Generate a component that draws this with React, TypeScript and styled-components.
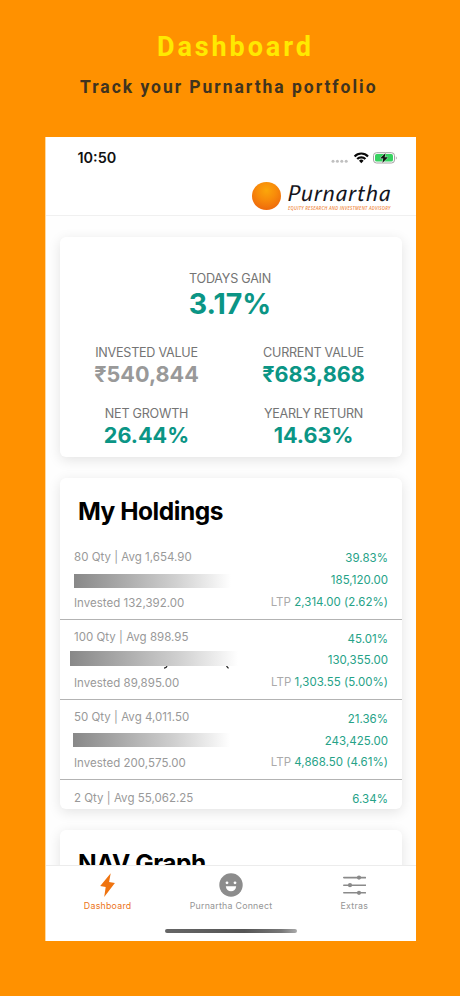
import React from 'react';
import styled, { createGlobalStyle } from 'styled-components';

const GlobalStyle = createGlobalStyle`
  * { box-sizing: border-box; }
  body { margin: 0; background: #ff9100; font-family: Inter, 'Liberation Sans', sans-serif; }
`;

const Page = styled.main`
  width: 460px;
  height: 996px;
  overflow: hidden;
  background: #ff9100;
  display: flex;
  flex-direction: column;
`;

const Headline = styled.h1`
  margin: 31px 0 0 157px;
  font: 700 27px/32px Roboto, sans-serif;
  letter-spacing: 2.9px;
  color: #ffe900;
  white-space: nowrap;
`;

const Tagline = styled.p`
  margin: 13px 0 0 80px;
  font: 700 17.5px/22px Roboto, sans-serif;
  letter-spacing: 1.97px;
  color: #40331f;
  white-space: nowrap;
`;

const Phone = styled.section`
  margin: 39px 0 0 45px;
  width: 371px;
  height: 804px;
  background: #fff;
  border: solid #ffd9a0;
  border-width: 0 0 0 1px;
  display: flex;
  flex-direction: column;
`;

const Header = styled.header`
  height: 79px;
  flex: none;
  border-bottom: 1px solid #f0f0f0;
`;

const StatusBar = styled.div`
  height: 41px;
  padding: 0 18px 0 31.5px;
  display: flex;
  align-items: center;
  justify-content: space-between;
`;

const Clock = styled.span`
  font-size: 14.4px;
  font-weight: 600;
  color: #111;
`;

const StatusIcons = styled.div`
  display: flex;
  align-items: center;
  svg { display: block; }
  svg + svg { margin-left: 2px; }
`;

const Brand = styled.div`
  display: flex;
  gap: 7px;
  padding: 4px 0 0 206px;
`;

const Sun = styled.div`
  width: 29px;
  height: 28px;
  border-radius: 50%;
  background: radial-gradient(circle at 50% 30%, #fba60a 0%, #f88b0a 40%, #ee6a0c 80%, #e9650f 100%);
`;

const BrandText = styled.div`
  width: 104px;
`;

const BrandName = styled.div`
  font: italic 400 22px/22px Lato, sans-serif;
  letter-spacing: 1.25px;
  transform: skewX(-5deg);
  color: #15151c;
  white-space: nowrap;
`;

const BrandLine = styled.div`
  margin-top: 1px;
  font: italic 600 4.4px/6px 'Open Sans', sans-serif;
  letter-spacing: 0.24px;
  color: #f18a44;
  white-space: nowrap;
`;

const Feed = styled.div`
  flex: 1;
  min-height: 0;
  overflow: hidden;
  padding: 21px 14px 0;
  background: #fefefe;
  display: flex;
  flex-direction: column;
  gap: 21px;
`;

const Card = styled.article<{ $h: number }>`
  height: ${(p) => p.$h}px;
  flex: none;
  overflow: hidden;
  background: #fff;
  border-radius: 6px;
  box-shadow: 0 3px 13px rgba(0, 0, 0, 0.11);
`;

const Stat = styled.div<{ $big?: boolean; $muted?: boolean }>`
  text-align: center;
  span {
    display: block;
    font-size: 12.6px;
    line-height: 16px;
    letter-spacing: -0.25px;
    color: #747474;
  }
  strong {
    display: block;
    margin-top: ${(p) => (p.$big ? 1 : 0)}px;
    font-size: ${(p) => (p.$big ? 28.5 : 21.6)}px;
    line-height: ${(p) => (p.$big ? 32 : 26)}px;
    font-weight: 700;
    color: ${(p) => (p.$muted ? '#999' : '#0b9585')};
  }
`;

const TopStat = styled.div`
  padding: 34px 2px 25px 0;
`;

const StatGrid = styled.div`
  display: grid;
  grid-template-columns: 167px 167px;
  justify-content: center;
  row-gap: 19px;
  padding-right: 2px;
`;

const CardTitle = styled.h2`
  margin: 0;
  padding: 17px 0 0 18px;
  font-size: 24.5px;
  line-height: 32px;
  font-weight: 700;
  letter-spacing: -0.47px;
  color: #000;
  white-space: nowrap;
`;

const HoldingList = styled.div`
  margin-top: 12.5px;
`;

const HoldingRow = styled.div`
  height: 80.3px;
  padding: 9.4px 14px 0;
  border-bottom: 1px solid #b3b3b3;
  display: flex;
  justify-content: space-between;
`;

const LeftCol = styled.div`
  width: 170px;
  font-size: 11.5px;
  line-height: 16px;
  letter-spacing: 0.02px;
  color: #999;
  white-space: nowrap;
`;

const RedactSlot = styled.div`
  height: 29.8px;
  position: relative;
`;

const Redaction = styled.div<{ $x: number; $y: number; $w: number; $h: number }>`
  position: absolute;
  left: ${(p) => p.$x}px;
  top: ${(p) => p.$y}px;
  width: ${(p) => p.$w}px;
  height: ${(p) => p.$h}px;
  background: linear-gradient(90deg, #888 0%, #a9a9a9 30%, #d0d0d0 65%, #eee 88%, #fff 100%);
`;

const Tails = styled.svg`
  position: absolute;
  left: 88px;
  top: 20.8px;
`;

const RightCol = styled.div`
  padding-top: 2.6px;
  text-align: right;
  font-size: 11.5px;
  line-height: 21.7px;
  letter-spacing: 0.02px;
  margin-top: -3px;
  color: #25a287;
  white-space: nowrap;
  em { font-style: normal; color: #aaa; }
`;

const TabBar = styled.nav`
  height: 76px;
  flex: none;
  background: #fff;
  border-top: 1px solid #ececec;
  display: flex;
  flex-direction: column;
  align-items: center;
`;

const Tabs = styled.div`
  width: 100%;
  height: 63px;
  display: grid;
  grid-template-columns: repeat(3, 1fr);
`;

const Tab = styled.div<{ $active?: boolean }>`
  padding-top: 7px;
  display: flex;
  flex-direction: column;
  align-items: center;
  font-size: 8.8px;
  line-height: 14px;
  letter-spacing: 0.25px;
  color: ${(p) => (p.$active ? '#ec7420' : '#959595')};
  svg { display: block; margin-bottom: 2px; }
`;

const HomeBar = styled.div`
  width: 132px;
  height: 4px;
  border-radius: 2px;
  background: linear-gradient(90deg, #666, #555 60%, #777 88%, #aaa);
`;

type Holding = {
  qty: string;
  invested?: string;
  pct: string;
  value?: string;
  ltp?: string;
  bar?: [number, number, number, number];
  tails?: boolean;
};

const holdings: Holding[] = [
  { qty: '80 Qty | Avg 1,654.90', invested: 'Invested 132,392.00', pct: '39.83%', value: '185,120.00', ltp: '2,314.00 (2.62%)', bar: [0, 9, 157, 14.5] },
  { qty: '100 Qty | Avg 898.95', invested: 'Invested 89,895.00', pct: '45.01%', value: '130,355.00', ltp: '1,303.55 (5.00%)', bar: [-4, 6, 168, 14.5], tails: true },
  { qty: '50 Qty | Avg 4,011.50', invested: 'Invested 200,575.00', pct: '21.36%', value: '243,425.00', ltp: '4,868.50 (4.61%)', bar: [-1, 8, 157, 13.5] },
  { qty: '2 Qty | Avg 55,062.25', pct: '6.34%' },
];

const SignalDots = () => (
  <svg width="18" height="12" viewBox="0 0 18 12">
    {[2, 6.4, 10.8, 15.2].map((x) => (
      <circle key={x} cx={x} cy="9.3" r="1.5" fill="#c0c0c0" />
    ))}
  </svg>
);

const Wifi = () => (
  <svg width="20" height="12" viewBox="0 0 20 12">
    <g fill="none" stroke="#080808" strokeWidth="2.2">
      <path d="M3.6 4.4 A9.2 9.2 0 0 1 17 4.4" />
      <path d="M6.2 7.1 A5.6 5.6 0 0 1 14.4 7.1" />
    </g>
    <path d="M8 8.8 A3.2 3.2 0 0 1 12.6 8.8 L10.3 11.2 Z" fill="#080808" />
  </svg>
);

const Battery = () => (
  <svg width="25" height="12" viewBox="0 0 25 12">
    <rect x="0.5" y="0.7" width="21" height="10.3" rx="3" fill="#fff" stroke="#a3a3a3" />
    <rect x="2" y="2.1" width="18" height="7.5" rx="1.7" fill="#37d160" />
    <path d="M22.9 4.3 a2.3 2.3 0 0 1 0 3.4Z" fill="#999" />
    <path d="M12.6 1 L7 6.5 H10.3 L9.3 10.9 L15 5.3 H11.6Z" fill="#111" stroke="#fff" strokeWidth="0.7" paintOrder="stroke" />
  </svg>
);

const Bolt = () => (
  <svg width="24" height="24" viewBox="0 0 24 24">
    <path d="M14.7 0.2 L4.2 12.9 L9.7 13.9 L8.2 24 L18.9 10.1 L13.1 9.1Z" fill="#ef730f" />
  </svg>
);

const Smile = () => (
  <svg width="24" height="24" viewBox="0 0 24 24">
    <circle cx="12" cy="12" r="11.7" fill="#8c8c8c" />
    <circle cx="8" cy="9.8" r="1.4" fill="#fff" />
    <circle cx="16" cy="9.8" r="1.4" fill="#fff" />
    <path d="M6.8 13.2 H17.2 C16.8 16.6 14.8 18.3 12 18.3 S7.2 16.6 6.8 13.2Z" fill="#fff" />
  </svg>
);

const Sliders = () => (
  <svg width="24" height="24" viewBox="0 0 24 24">
    <g stroke="#8a8a8a" strokeWidth="1.6" strokeLinecap="round" fill="#8a8a8a">
      <path d="M1.8 4.6 H23.4 M1.8 12.2 H23.4 M1.8 19.8 H23.4" />
      <circle cx="17" cy="4.6" r="1.3" />
      <circle cx="8" cy="12.2" r="1.3" />
      <circle cx="17" cy="19.8" r="1.3" />
    </g>
  </svg>
);

export default function App() {
  return (
    <Page>
      <GlobalStyle />
      <Headline>Dashboard</Headline>
      <Tagline>Track your Purnartha portfolio</Tagline>
      <Phone>
        <Header>
          <StatusBar>
            <Clock>10:50</Clock>
            <StatusIcons>
              <SignalDots />
              <Wifi />
              <Battery />
            </StatusIcons>
          </StatusBar>
          <Brand>
            <Sun />
            <BrandText>
              <BrandName>Purnartha</BrandName>
              <BrandLine>EQUITY RESEARCH AND INVESTMENT ADVISORY</BrandLine>
            </BrandText>
          </Brand>
        </Header>
        <Feed>
          <Card $h={220}>
            <TopStat>
              <Stat $big><span>TODAYS GAIN</span><strong>3.17%</strong></Stat>
            </TopStat>
            <StatGrid>
              <Stat $muted><span>INVESTED VALUE</span><strong>₹540,844</strong></Stat>
              <Stat><span>CURRENT VALUE</span><strong>₹683,868</strong></Stat>
              <Stat><span>NET GROWTH</span><strong>26.44%</strong></Stat>
              <Stat><span>YEARLY RETURN</span><strong>14.63%</strong></Stat>
            </StatGrid>
          </Card>
          <Card $h={331}>
            <CardTitle>My Holdings</CardTitle>
            <HoldingList>
              {holdings.map((h) => (
                <HoldingRow key={h.qty}>
                  <LeftCol>
                    <div>{h.qty}</div>
                    <RedactSlot>
                      {h.bar && <Redaction $x={h.bar[0]} $y={h.bar[1]} $w={h.bar[2]} $h={h.bar[3]} />}
                      {h.tails && (
                        <Tails width="72" height="4" viewBox="0 0 72 4">
                          <path d="M5 0 Q4.5 2 2 2.2 M64.5 0 L66.5 2.4" stroke="#222" strokeWidth="1.2" fill="none" />
                        </Tails>
                      )}
                    </RedactSlot>
                    <div>{h.invested}</div>
                  </LeftCol>
                  <RightCol>
                    <div>{h.pct}</div>
                    <div>{h.value}</div>
                    {h.ltp && <div><em>LTP</em> {h.ltp}</div>}
                  </RightCol>
                </HoldingRow>
              ))}
            </HoldingList>
          </Card>
          <Card $h={220}>
            <CardTitle>NAV Graph</CardTitle>
          </Card>
        </Feed>
        <TabBar>
          <Tabs>
            <Tab $active><Bolt />Dashboard</Tab>
            <Tab><Smile />Purnartha Connect</Tab>
            <Tab><Sliders />Extras</Tab>
          </Tabs>
          <HomeBar />
        </TabBar>
      </Phone>
    </Page>
  );
}
